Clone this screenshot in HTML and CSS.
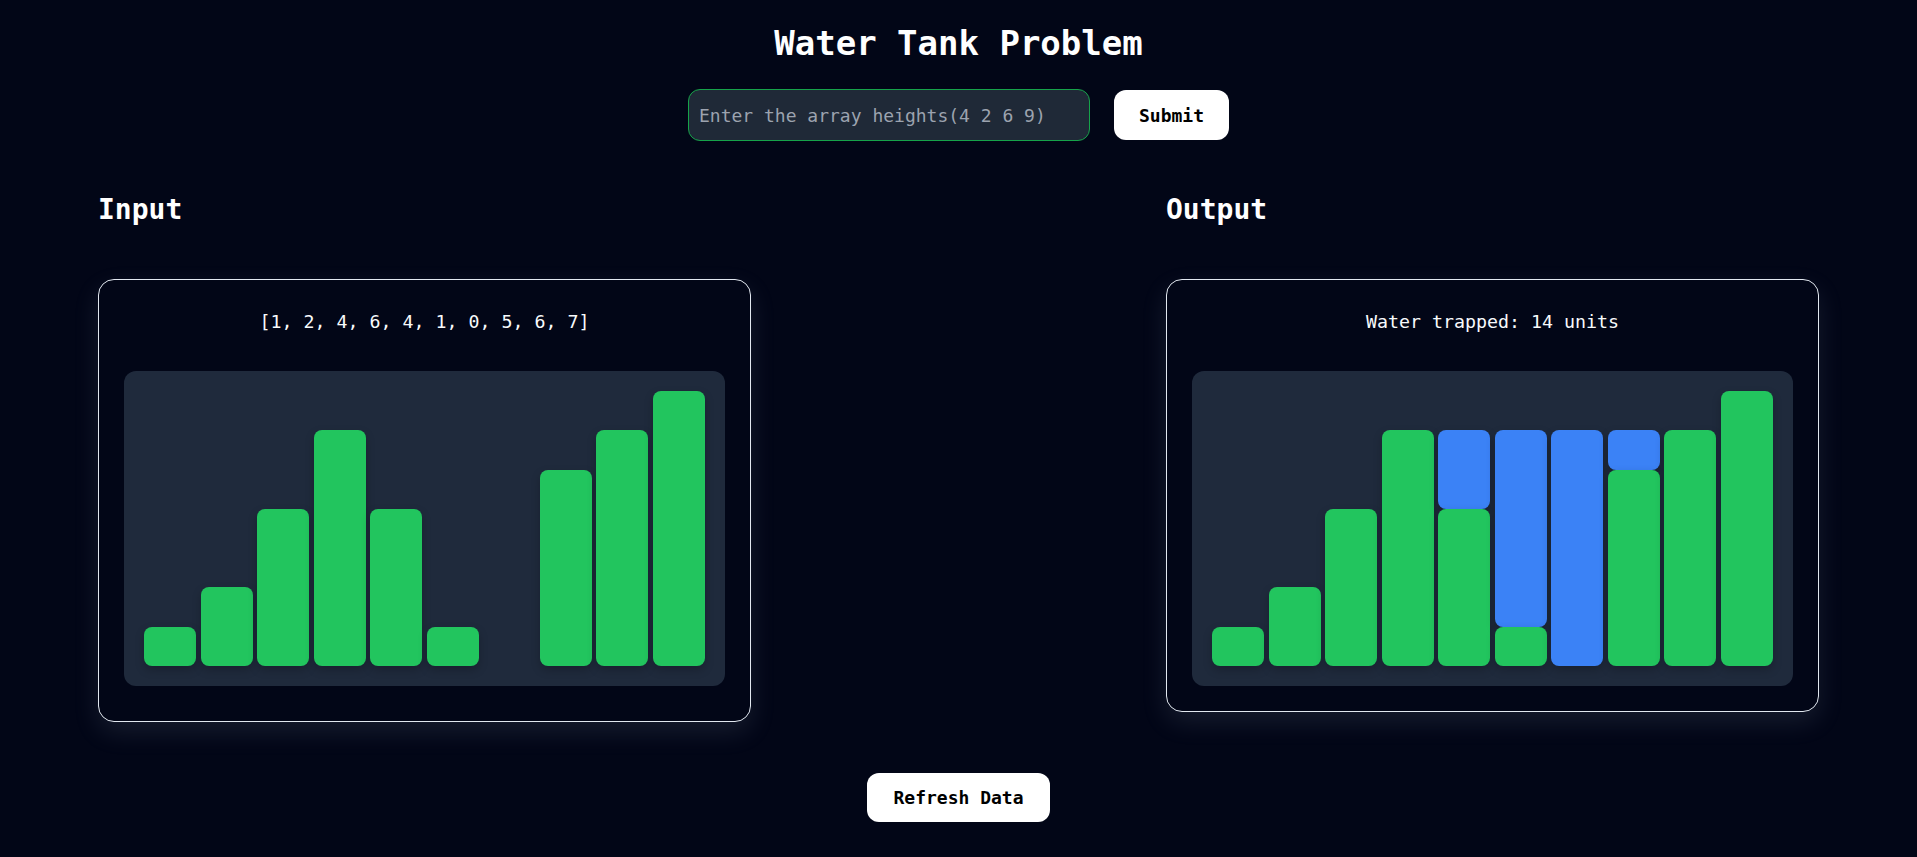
FILE: index.html
```html
<!DOCTYPE html>
<html lang="en">
<head>
<meta charset="utf-8">
<title>Water Tank Problem</title>
<link rel="stylesheet" href="styles.css">
</head>
<body>
<main class="page">
  <h1 class="title">Water Tank Problem</h1>
  <form class="entry" onsubmit="return false">
    <input class="entry-input" type="text" placeholder="Enter the array heights(4 2 6 9)">
    <button class="btn btn-submit" type="submit">Submit</button>
  </form>

  <section class="panels">
    <div class="panel">
      <h2 class="panel-title">Input</h2>
      <div class="card card-input">
        <p class="card-text">[1, 2, 4, 6, 4, 1, 0, 5, 6, 7]</p>
        <div class="chart">
          <div class="col"><div class="bar bar-wall" style="height:14.2857%"></div></div>
          <div class="col"><div class="bar bar-wall" style="height:28.5714%"></div></div>
          <div class="col"><div class="bar bar-wall" style="height:57.1429%"></div></div>
          <div class="col"><div class="bar bar-wall" style="height:85.7143%"></div></div>
          <div class="col"><div class="bar bar-wall" style="height:57.1429%"></div></div>
          <div class="col"><div class="bar bar-wall" style="height:14.2857%"></div></div>
          <div class="col"></div>
          <div class="col"><div class="bar bar-wall" style="height:71.4286%"></div></div>
          <div class="col"><div class="bar bar-wall" style="height:85.7143%"></div></div>
          <div class="col"><div class="bar bar-wall" style="height:100%"></div></div>
        </div>
      </div>
    </div>

    <div class="panel">
      <h2 class="panel-title">Output</h2>
      <div class="card">
        <p class="card-text">Water trapped: 14 units</p>
        <div class="chart">
          <div class="col"><div class="bar bar-wall" style="height:14.2857%"></div></div>
          <div class="col"><div class="bar bar-wall" style="height:28.5714%"></div></div>
          <div class="col"><div class="bar bar-wall" style="height:57.1429%"></div></div>
          <div class="col"><div class="bar bar-wall" style="height:85.7143%"></div></div>
          <div class="col"><div class="bar bar-water" style="height:28.5714%"></div><div class="bar bar-wall" style="height:57.1429%"></div></div>
          <div class="col"><div class="bar bar-water" style="height:71.4286%"></div><div class="bar bar-wall" style="height:14.2857%"></div></div>
          <div class="col"><div class="bar bar-water" style="height:85.7143%"></div></div>
          <div class="col"><div class="bar bar-water" style="height:14.2857%"></div><div class="bar bar-wall" style="height:71.4286%"></div></div>
          <div class="col"><div class="bar bar-wall" style="height:85.7143%"></div></div>
          <div class="col"><div class="bar bar-wall" style="height:100%"></div></div>
        </div>
      </div>
    </div>
  </section>

  <div class="actions">
    <button class="btn btn-refresh" type="button">Refresh Data</button>
  </div>
</main>
</body>
</html>
```

FILE: styles.css
```css
* { box-sizing: border-box; }

html, body {
  margin: 0;
  padding: 0;
  background: #020617;
}

body {
  font-family: "DejaVu Sans Mono", "Liberation Mono", monospace;
  color: #ffffff;
  min-height: 857px;
}

.page {
  display: flex;
  flex-direction: column;
  padding-top: 23px;
}

.title {
  margin: 0;
  text-align: center;
  font-size: 34px;
  line-height: 40px;
  font-weight: 700;
  color: #ffffff;
}

.entry {
  margin: 26px 0 0;
  display: flex;
  justify-content: center;
  align-items: center;
  gap: 24px;
}

.entry-input {
  width: 402px;
  height: 52px;
  padding: 0 10px;
  background: #1f2937;
  border: 1px solid #16a34a;
  border-radius: 12px;
  color: #e5e7eb;
  font-family: inherit;
  font-size: 18px;
  outline: none;
}

.entry-input::placeholder {
  color: #9ca3af;
}

.btn {
  background: #ffffff;
  color: #000000;
  border: none;
  border-radius: 12px;
  font-family: inherit;
  font-size: 18px;
  font-weight: 700;
  cursor: pointer;
}

.btn-submit {
  height: 50px;
  padding: 0 25px;
}

.btn-refresh {
  height: 49px;
  padding: 0 26px;
}

.panels {
  margin-top: 52px;
  padding: 0 98px 0 98px;
  display: flex;
  justify-content: space-between;
  align-items: flex-start;
}

.panel {
  width: 653px;
  display: flex;
  flex-direction: column;
}

.panel-title {
  margin: 0;
  font-size: 28px;
  line-height: 34px;
  font-weight: 700;
  color: #ffffff;
}

.card {
  margin-top: 52px;
  border: 1px solid #e2e8f0;
  border-radius: 16px;
  padding: 25px;
  box-shadow: 0 10px 26px rgba(148, 163, 184, 0.14);
  background: #020617;
}

.card-input {
  padding-bottom: 35px;
}

.card-text {
  margin: 0;
  text-align: center;
  font-size: 18.3px;
  line-height: 34px;
  color: #f8fafc;
}

.chart {
  margin-top: 32px;
  height: 315px;
  padding: 20px;
  background: #1f2a3c;
  border-radius: 12px;
  display: flex;
  gap: 4.5px;
}

.col {
  flex: 1;
  height: 100%;
  display: flex;
  flex-direction: column;
  justify-content: flex-end;
}

.bar {
  width: 100%;
  border-radius: 8px;
  box-shadow: 0 4px 10px rgba(0, 0, 0, 0.22);
}

.bar-wall {
  background: #22c55e;
}

.bar-water {
  background: #3b82f6;
}

.actions {
  margin-top: 51px;
  display: flex;
  justify-content: center;
}
```
